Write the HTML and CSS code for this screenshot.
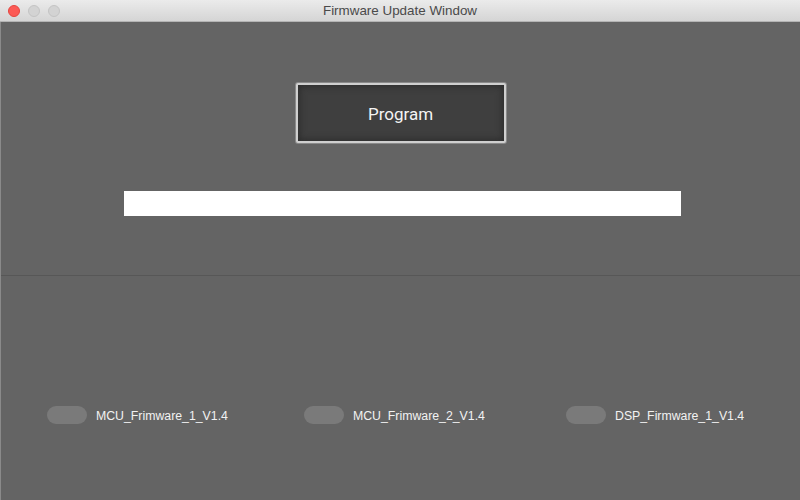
FILE: index.html
```html
<!DOCTYPE html>
<html>
<head>
<meta charset="utf-8">
<link rel="stylesheet" href="styles.css">
</head>
<body>
<div class="window">
  <div class="titlebar">
    <div class="lights">
      <span class="light close"></span>
      <span class="light"></span>
      <span class="light"></span>
    </div>
    <div class="title">Firmware Update Window</div>
  </div>
  <div class="top">
    <button class="program">Program</button>
    <div class="progress"></div>
  </div>
  <div class="bottom">
    <div class="item"><span class="toggle"></span><span class="label">MCU_Frimware_1_V1.4</span></div>
    <div class="item"><span class="toggle"></span><span class="label">MCU_Frimware_2_V1.4</span></div>
    <div class="item"><span class="toggle"></span><span class="label">DSP_Firmware_1_V1.4</span></div>
  </div>
</div>
</body>
</html>
```

FILE: styles.css
```css
html, body {
  margin: 0;
  padding: 0;
  width: 800px;
  height: 500px;
  overflow: hidden;
  font-family: "Liberation Sans", Arial, sans-serif;
}
.window {
  width: 800px;
  height: 500px;
  background: #646464;
  display: flex;
  flex-direction: column;
  border-left: 1px solid #8a8a8a;
  box-sizing: border-box;
}
.titlebar {
  height: 22px;
  flex: none;
  box-sizing: border-box;
  background: linear-gradient(#ebebeb, #d5d5d5);
  border-bottom: 1px solid #b4b4b4;
  display: flex;
  align-items: center;
  position: relative;
  margin-left: -1px;
}
.lights {
  display: flex;
  gap: 8px;
  padding-left: 8px;
}
.light {
  width: 12px;
  height: 12px;
  border-radius: 50%;
  box-sizing: border-box;
  background: #d3d3d3;
  border: 1px solid #c4c4c4;
}
.light.close {
  background: #fc5a55;
  border-color: #e5453f;
}
.title {
  position: absolute;
  left: 0;
  right: 0;
  top: 0;
  line-height: 22px;
  text-align: center;
  font-size: 13.4px;
  color: #4a4a4a;
}
.top {
  height: 253px;
  flex: none;
  display: flex;
  flex-direction: column;
  align-items: center;
  border-bottom: 1px solid #575757;
}
.program {
  margin-top: 61px;
  width: 210px;
  height: 60px;
  box-sizing: border-box;
  border: 2px solid #cfcfcf;
  border-radius: 2px;
  background: #3f3f3f;
  box-shadow: inset 0 0 6px 2px #2e2e2e, 0 0 0 1px #8a8a8a;
  color: #f4f4f4;
  font-family: Roboto, "Liberation Sans", sans-serif;
  font-size: 17px;
  padding: 2px 0 0 0;
}
.progress {
  margin-top: 48px;
  width: 557px;
  height: 25px;
  background: #ffffff;
  margin-left: 4px;
}
.bottom {
  flex: 1;
  display: grid;
  grid-template-columns: 257px 262px auto;
  align-items: start;
  padding-left: 46px;
  padding-top: 130px;
}
.item {
  display: flex;
  align-items: center;
  gap: 9px;
}
.toggle {
  width: 40px;
  height: 18px;
  border-radius: 9px;
  background: #7a7a7a;
}
.label {
  color: #f2f2f2;
  font-size: 12.3px;
  padding-top: 1px;
}
```
